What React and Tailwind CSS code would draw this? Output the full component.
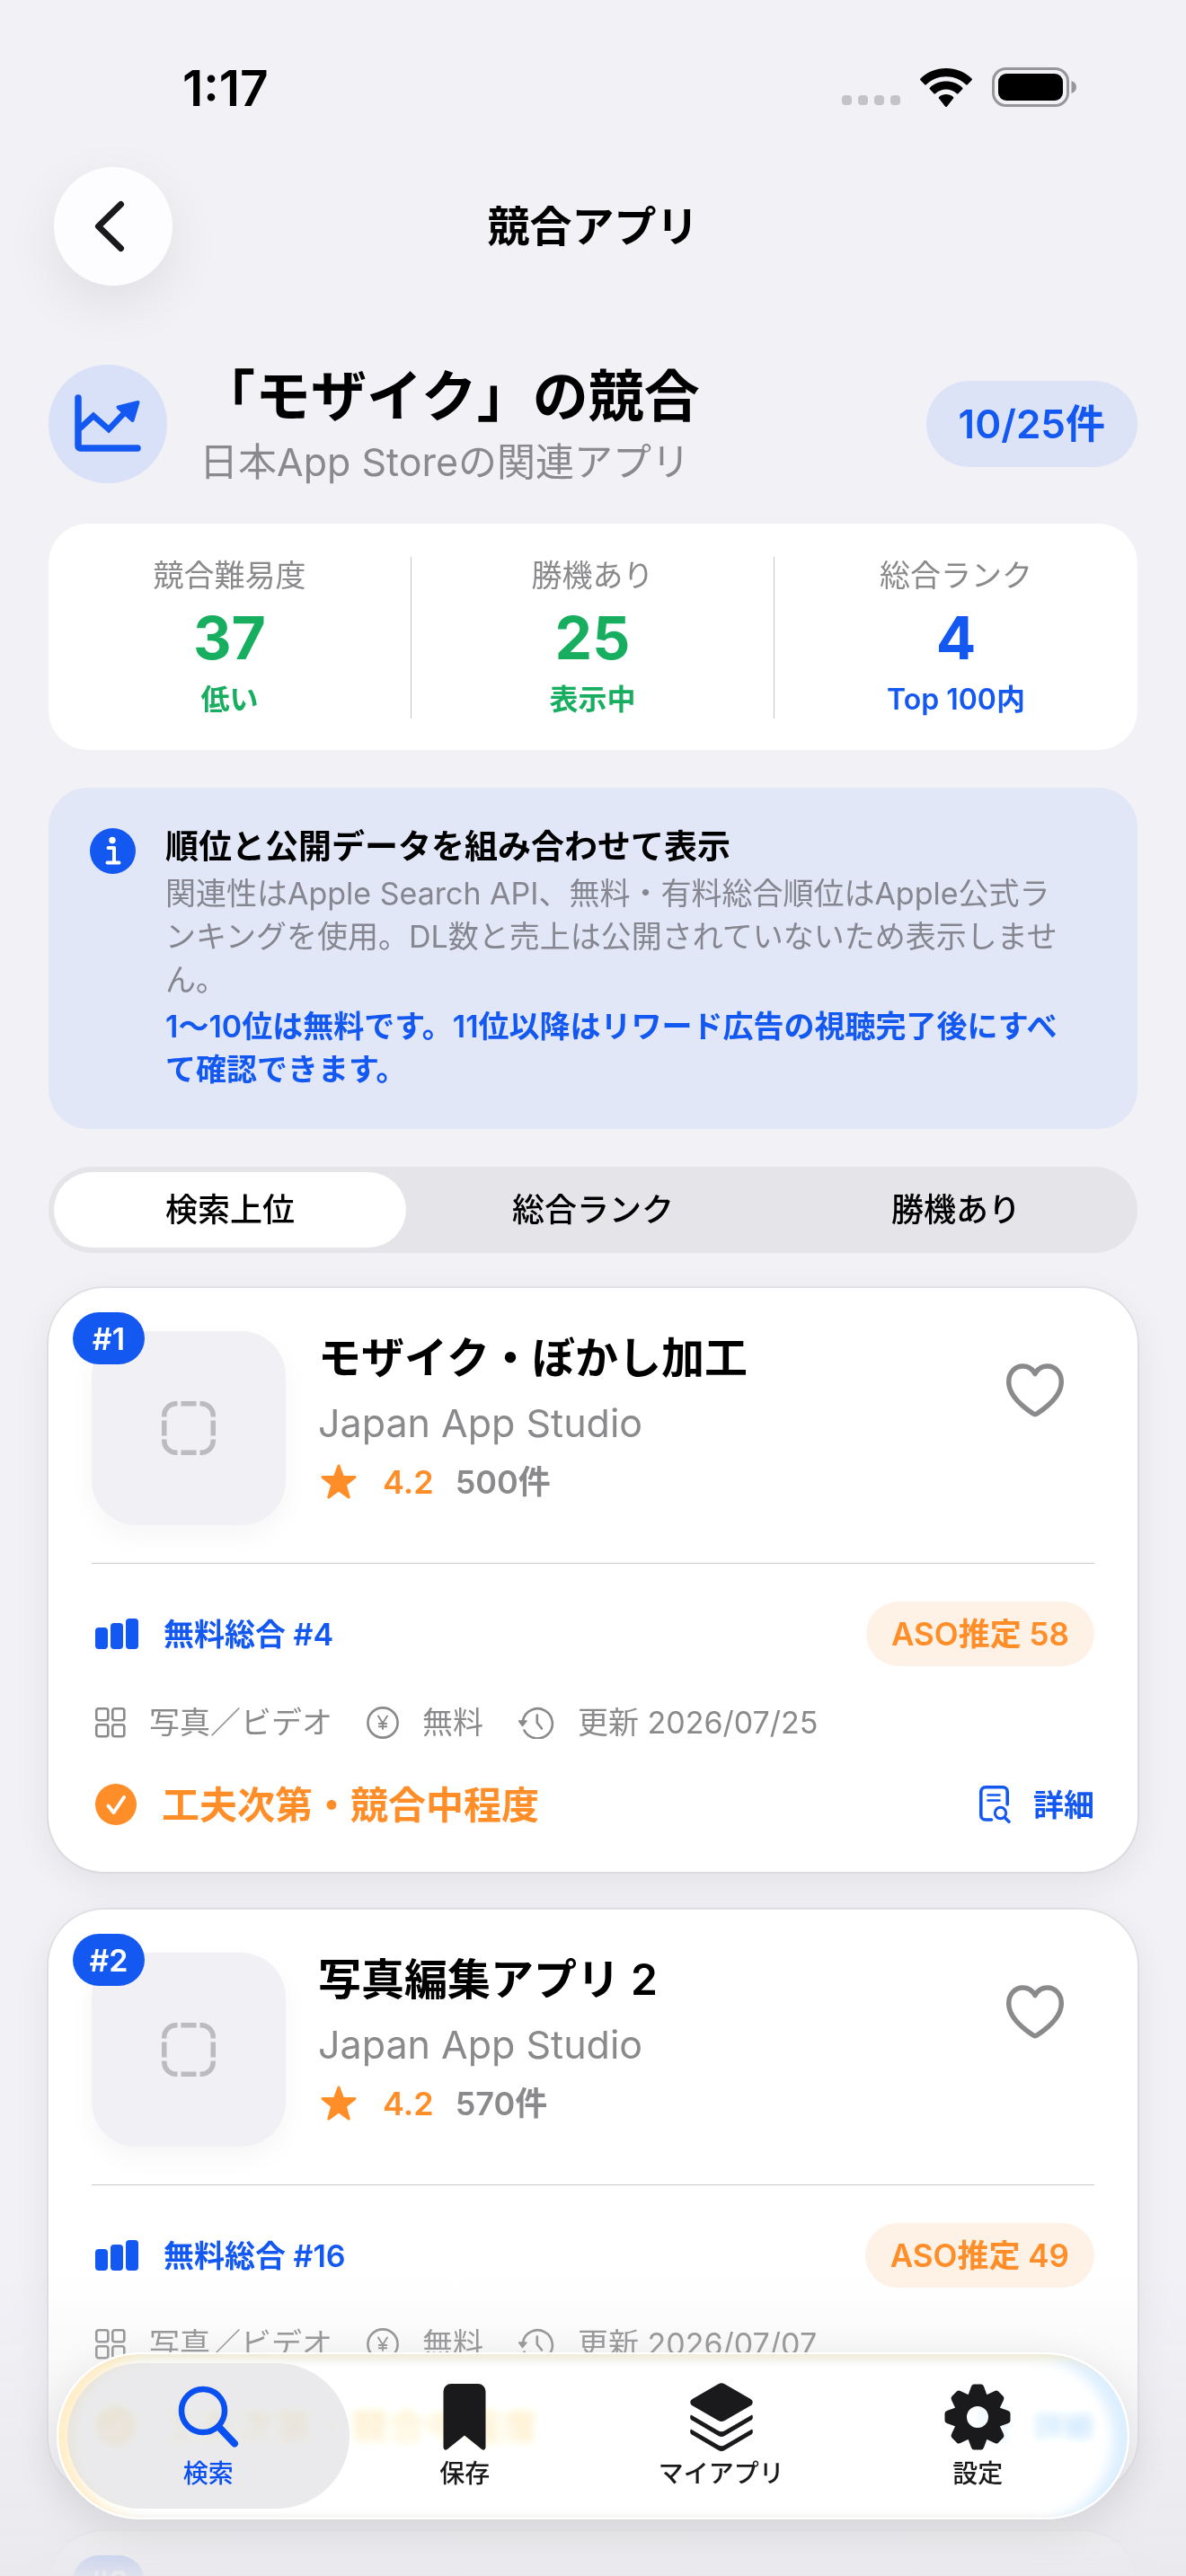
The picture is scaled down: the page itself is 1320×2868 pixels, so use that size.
import React, { useState } from 'react';

const STATS = [
    { label: '競合難易度', value: '37', note: '低い', color: 'text-[#18ae60]' },
    { label: '勝機あり', value: '25', note: '表示中', color: 'text-[#18ae60]' },
    { label: '総合ランク', value: '4', note: 'Top 100内', color: 'text-[#1458f2]' },
];

const SORTS = ['検索上位', '総合ランク', '勝機あり'];

const APPS = [
    { rank: 1, name: 'モザイク・ぼかし加工', studio: 'Japan App Studio', rating: '4.2', reviews: 500, chart: 4, aso: 58, category: '写真／ビデオ', price: '無料', updated: '2026/07/25', verdict: '工夫次第・競合中程度' },
    { rank: 2, name: '写真編集アプリ 2', studio: 'Japan App Studio', rating: '4.2', reviews: 570, chart: 16, aso: 49, category: '写真／ビデオ', price: '無料', updated: '2026/07/07', verdict: '工夫次第・競合中程度' },
    { rank: 3, name: '写真編集アプリ 3', studio: 'Japan App Studio', rating: '4.2', reviews: 640, chart: 28, aso: 47, category: '写真／ビデオ', price: '無料', updated: '2026/07/01', verdict: '工夫次第・競合中程度' },
];

/* ---------- icons ---------- */

const WifiIcon = () => (
    <svg width="58" height="43" viewBox="0 0 58 43" aria-hidden="true">
        <path d="M29 0C40 0 50 4.200 57.300 11.300a1.500 1.500 0 0 1 0 2.200L53 17.900a1.500 1.500 0 0 1-2.100 0C45 12.300 37.300 9.200 29 9.200S13 12.300 7.100 17.900a1.500 1.500 0 0 1-2.100 0L.7 13.500a1.500 1.500 0 0 1 0-2.200C8 4.200 18 0 29 0z" />
        <path d="M29 14.500c6.900 0 13.200 2.600 18 6.900a1.500 1.500 0 0 1 0 2.200l-4.300 4.300a1.500 1.500 0 0 1-2.100 0C37.400 25.200 33.400 23.600 29 23.600s-8.400 1.600-11.600 4.300a1.500 1.500 0 0 1-2.100 0L11 23.600a1.500 1.500 0 0 1 0-2.200c4.800-4.300 11.100-6.900 18-6.900z" />
        <path d="M29 29c3 0 5.600 1 7.700 2.800a1.500 1.500 0 0 1 0 2.200L30 42.400a1.400 1.400 0 0 1-2 0L21.300 34a1.500 1.500 0 0 1 0-2.200C23.400 30 26 29 29 29z" />
    </svg>
);

const BatteryIcon = () => (
    <svg width="94" height="44" viewBox="0 0 94 44" fill="none" aria-hidden="true">
        <rect x="1.500" y="1.500" width="83" height="41" rx="14" stroke="#97979b" strokeWidth="3" />
        <rect x="7" y="7" width="72" height="30" rx="9" fill="#000" />
        <path d="M88.500 15c3.500 1.200 5.500 4 5.500 7s-2 5.800-5.500 7z" fill="#97979b" />
    </svg>
);

const BackIcon = () => (
    <svg width="34" height="58" viewBox="0 0 34 58" fill="none" stroke="#1a1a1c" strokeWidth="7" strokeLinecap="round" strokeLinejoin="round" aria-hidden="true">
        <path d="M29.500 4.500 4.500 29l25 24.500" />
    </svg>
);

const TrendIcon = () => (
    <svg width="74" height="66" viewBox="0 0 74 66" fill="none" stroke="#1458f2" strokeLinecap="round" strokeLinejoin="round" aria-hidden="true">
        <path d="M4 4v53.500a2.500 2.500 0 0 0 2.500 2.500H70" strokeWidth="7.500" />
        <path d="M7 37 21 24l17 15 20-21" strokeWidth="6.500" strokeLinejoin="miter" />
        <path d="M70.500 9 48.500 14.500 64.500 29z" fill="#1458f2" strokeWidth="4" />
    </svg>
);

const InfoIcon = () => (
    <svg width="51" height="51" viewBox="0 0 51 51" className="mt-[3px] shrink-0" aria-hidden="true">
        <circle cx="25.500" cy="25.500" r="25.500" fill="#1458f2" />
        <circle cx="25" cy="13.500" r="3.700" fill="#fff" />
        <path d="M20.500 22H27v16M19.500 38.500h13" fill="none" stroke="#fff" strokeWidth="4" strokeLinecap="round" strokeLinejoin="round" />
    </svg>
);

const PlaceholderIcon = () => (
    <svg width="60" height="60" viewBox="0 0 60 60" fill="none" stroke="#bcbcc0" strokeWidth="5.500" aria-hidden="true">
        <path d="M2.750 17.500V16A13.250 13.250 0 0 1 16 2.750h1.500M42.500 2.750H44A13.250 13.250 0 0 1 57.250 16v1.500M57.250 42.500V44A13.250 13.250 0 0 1 44 57.250h-1.500M17.500 57.250H16A13.250 13.250 0 0 1 2.750 44v-1.500" />
        <path d="M21.500 2.750h17M21.500 57.250h17M2.750 21.500v17M57.250 21.500v17" />
    </svg>
);

const StarIcon = () => (
    <svg width="44" height="40" viewBox="-1 0 44 40" fill="#ff8d28" stroke="#ff8d28" strokeWidth="3" strokeLinejoin="round" aria-hidden="true">
        <path d="M22 2l4.600 12.500h13.400L29.200 23 33.200 37 22 28.800 10.800 37l4-14L4 14.500h13.400z" />
    </svg>
);

const HeartIcon = () => (
    <svg width="66" height="60" viewBox="0 0 66 60" fill="none" stroke="#8a8a8c" strokeWidth="5.500" strokeLinecap="round" strokeLinejoin="round" aria-hidden="true">
        <path d="M33 11.500C30 6 25.500 3 19.500 3 10.300 3 3.700 10.500 3.700 20.500c0 12.500 9.800 24 27.300 35.500q2 1.300 4 0c17.500-11.500 27.300-23 27.300-35.500C62.300 10.500 55.700 3 46.500 3 40.500 3 36 6 33 11.500z" />
    </svg>
);

const BarsIcon = () => (
    <svg width="48" height="34" viewBox="0 0 48 34" fill="#1458f2" aria-hidden="true">
        <rect x="0" y="10" width="14" height="24" rx="4" />
        <rect x="17" y="5" width="14" height="29" rx="4" />
        <rect x="34" y="0" width="14" height="34" rx="4" />
    </svg>
);

const GridIcon = () => (
    <svg width="34" height="34" viewBox="0 0 34 34" fill="none" stroke="#8a8a8c" strokeWidth="2.600" aria-hidden="true">
        <rect x="1.300" y="1.300" width="13" height="13" rx="2.500" />
        <rect x="19.300" y="1.300" width="13" height="13" rx="2.500" />
        <rect x="1.300" y="19.300" width="13" height="13" rx="2.500" />
        <rect x="19.300" y="19.300" width="13" height="13" rx="2.500" />
    </svg>
);

const YenIcon = () => (
    <svg width="36" height="36" viewBox="0 0 36 36" fill="none" stroke="#8a8a8c" strokeLinecap="round" aria-hidden="true">
        <circle cx="18" cy="18" r="16.600" strokeWidth="2.600" />
        <path d="M13 10.500l5 8 5-8M18 18.500V25M13.800 19h8.400M13.800 22.300h8.400" strokeWidth="1.900" />
    </svg>
);

const HistoryIcon = () => (
    <svg width="41" height="36" viewBox="0 0 41 36" fill="none" stroke="#8a8a8c" strokeWidth="2.600" strokeLinecap="round" strokeLinejoin="round" aria-hidden="true">
        <path d="M6 15.500A16.600 16.600 0 1 1 7.500 26.500" />
        <path d="M21.800 9.500V18l5.200 6.500" />
        <path d="M1.500 16h8.500L5.500 21.500z" fill="#8a8a8c" strokeWidth="1.500" />
    </svg>
);

const CheckIcon = () => (
    <svg width="46" height="46" viewBox="0 0 46 46" fill="none" aria-hidden="true">
        <circle cx="23" cy="23" r="23" fill="#ff8d28" />
        <path d="M14.500 24.500l6 7.500L32 15" stroke="#fff" strokeWidth="4" strokeLinecap="round" strokeLinejoin="round" />
    </svg>
);

const DetailIcon = () => (
    <svg width="36" height="42" viewBox="0 0 36 42" fill="none" stroke="#1458f2" strokeWidth="3.600" strokeLinecap="round" aria-hidden="true">
        <path d="M13.500 38H6.800a5 5 0 0 1-5-5V6.800a5 5 0 0 1 5-5h19.400a5 5 0 0 1 5 5V21" />
        <path d="M9.500 10.500h13M9.500 16.500h13" strokeWidth="2.600" />
        <circle cx="23.500" cy="30.500" r="6.200" strokeWidth="3" />
        <path d="M28.200 35.500l4.800 4.800" strokeWidth="3.400" />
    </svg>
);

const SearchIcon = () => (
    <svg width="68" height="70" viewBox="0 0 68 70" fill="none" stroke="currentColor" strokeLinecap="round" aria-hidden="true">
        <circle cx="28" cy="28" r="24" strokeWidth="6.500" />
        <path d="M45.500 46 63 64.500" strokeWidth="8" />
    </svg>
);

const BookmarkIcon = () => (
    <svg width="48" height="74" viewBox="0 0 48 74" fill="currentColor" aria-hidden="true">
        <path d="M9 0h30a8.500 8.500 0 0 1 8.500 8.500v62c0 3-2.800 4.200-4.900 2L24 57.500 5.400 72.500c-2.100 2.200-4.900 1-4.900-2v-62A8.500 8.500 0 0 1 9 0z" />
    </svg>
);

const LayersIcon = () => (
    <svg width="70" height="76" viewBox="0 0 70 76" fill="currentColor" aria-hidden="true">
        <path d="M31.500 1.300a7 7 0 0 1 7 0L67.500 18a4 4 0 0 1 0 7.200L38.500 42a7 7 0 0 1-7 0l-29-16.800a4 4 0 0 1 0-7.200z" />
        <path d="M1 35.500l30.500 17.700a7 7 0 0 0 7 0L69 35.500c1.700 2.600.8 5.100-1.800 6.600L38.500 59a7 7 0 0 1-7 0L2.800 42.100C.2 40.600-.7 38.100 1 35.500z" />
        <path d="M1 51.500l30.500 17.700a7 7 0 0 0 7 0L69 51.500c1.700 2.600.8 5.100-1.800 6.600L38.500 75a7 7 0 0 1-7 0L2.800 58.100C.2 56.600-.7 54.100 1 51.500z" />
    </svg>
);

const GearIcon = () => (
    <svg width="74" height="74" viewBox="-37 -37 74 74" fill="currentColor" aria-hidden="true">
        <circle r="19.500" fill="none" stroke="currentColor" strokeWidth="15" />
        {[0, 45, 90, 135, 180, 225, 270, 315].map((deg) => (
            <path key={deg} transform={`rotate(${deg})`} d="M-11-23l3.800-10.500Q-6.300-36.500-4-36.500H4q2.300 0 3.200 3L11-23z" />
        ))}
    </svg>
);

/* ---------- sections ---------- */

const StatusBar = () => (
    <div className="flex h-[186px] items-start justify-between pt-[66px] pr-[122px] pl-[203px]">
        <span className="text-[55px] leading-[64px] font-semibold">1:17</span>
        <div className="flex h-[62px] items-center">
            <div className="mr-[22px] flex gap-[7px] self-end pb-[11px]">
                {[0, 1, 2, 3].map((i) => (
                    <span key={i} className="size-[11px] rounded-[4px] bg-[#c4c4c8]" />
                ))}
            </div>
            <WifiIcon />
            <span className="ml-[22px]"><BatteryIcon /></span>
        </div>
    </div>
);

const StatsCard = () => (
    <section className="mt-[39px] grid grid-cols-3 divide-x divide-[#c6c6c8] rounded-[44px] bg-white pt-[37px] pb-[35px]">
        {STATS.map((s) => (
            <div key={s.label} className="flex flex-col items-center gap-2">
                <span className="text-[34px] leading-[42px] text-[#8a8a8c]">{s.label}</span>
                <strong className={`text-[66px] leading-[80px] font-bold ${s.color}`}>{s.value}</strong>
                <span className={`text-[32px] leading-[42px] font-semibold ${s.color}`}>{s.note}</span>
            </div>
        ))}
    </section>
);

const InfoBox = () => (
    <section className="mt-[42px] flex gap-[33px] rounded-[44px] bg-[#e2e7f7] py-[42px] pr-[72px] pl-[46px]">
        <InfoIcon />
        <div className="flex flex-col gap-1 text-[34px] leading-[48px]">
            <h3 className="text-[37px] font-semibold">順位と公開データを組み合わせて表示</h3>
            <p className="text-[#85868f]">関連性はApple Search API、無料・有料総合順位はApple公式ランキングを使用。DL数と売上は公開されていないため表示しません。</p>
            <p className="font-semibold text-[#1458f2]">1〜10位は無料です。11位以降はリワード広告の視聴完了後にすべて確認できます。</p>
        </div>
    </section>
);

const SortTabs = () => {
    const [active, setActive] = useState(0);

    return (
        <div role="tablist" className="mt-[42px] flex rounded-full bg-[#e4e4e9] py-[6px]">
            {SORTS.map((label, i) => (
                <button
                    key={label}
                    role="tab"
                    aria-selected={i === active}
                    onClick={() => setActive(i)}
                    className={`mx-[6px] h-[84px] flex-1 rounded-full text-[36px] font-medium ${i === active ? 'bg-white' : ''}`}
                >
                    {label}
                </button>
            ))}
        </div>
    );
};

const AppCard = ({ app }) => (
    <article className="rounded-[62px] bg-white px-[48px] pt-[48px] pb-[45px] shadow-[0_0_0_2px_rgba(0,0,0,0.05),0_12px_42px_rgba(0,0,0,0.07)]">
        <div className="flex">
            <div className="relative flex size-[216px] shrink-0 items-center justify-center rounded-[50px] bg-[#f1f1f5] shadow-[0_12px_30px_rgba(0,0,0,0.04)]">
                <PlaceholderIcon />
                <span className="absolute -top-[21px] -left-[21px] flex h-[58px] min-w-[80px] items-center justify-center rounded-full bg-[#1458f2] px-[18px] text-[34px] font-semibold text-white">#{app.rank}</span>
            </div>
            <div className="ml-[36px] flex flex-1 flex-col gap-3">
                <h3 className="text-[48px] leading-[60px] font-semibold">{app.name}</h3>
                <p className="text-[43px] leading-[60px] text-[#8a8a8c]">{app.studio}</p>
                <p className="flex items-center gap-[24px] text-[36px] leading-[48px] font-semibold text-[#8a8a8c]">
                    <span className="flex items-center gap-[28px] text-[#ff8d28]"><StarIcon />{app.rating}</span>
                    <span>{app.reviews}件</span>
                </p>
            </div>
            <button aria-label="お気に入り" className="flex size-[132px] items-center justify-center"><HeartIcon /></button>
        </div>

        <hr className="mt-[42px] mb-[42px] border-t border-[#c9c9cc]" />

        <div className="flex items-center justify-between text-[34px] font-semibold">
            <span className="flex items-center gap-[28px] pl-1 text-[#1458f2]"><BarsIcon />無料総合 #{app.chart}</span>
            <span className="flex h-[72px] items-center rounded-full bg-[#fef1e6] px-[28px] text-[35px] text-[#ff8d28]">ASO推定 {app.aso}</span>
        </div>

        <div className="mt-[39px] flex items-center gap-[38px] pl-1 text-[34px] leading-[48px] text-[#8a8a8c]">
            <span className="flex items-center gap-[26px]"><GridIcon />{app.category}</span>
            <span className="flex items-center gap-[26px]"><YenIcon />{app.price}</span>
            <span className="flex items-center gap-[26px]"><HistoryIcon />更新 {app.updated}</span>
        </div>

        <div className="mt-[37px] flex h-[60px] items-center justify-between pl-1">
            <span className="flex items-center gap-[28px] text-[42px] font-semibold text-[#ff8d28]"><CheckIcon />{app.verdict}</span>
            <button className="flex items-center gap-[24px] text-[34px] font-semibold text-[#1458f2]"><DetailIcon />詳細</button>
        </div>
    </article>
);

const TABS = [
    { label: '検索', icon: <SearchIcon /> },
    { label: '保存', icon: <BookmarkIcon /> },
    { label: 'マイアプリ', icon: <LayersIcon /> },
    { label: '設定', icon: <GearIcon /> },
];

const TabBar = () => {
    const [current, setCurrent] = useState(0);

    return (
        <div className="pointer-events-none fixed inset-x-0 bottom-0 bg-linear-to-b from-transparent via-[#e9e9ed]/50 via-60% to-[#e9e9ed]/95 px-[63px] pt-[90px] pb-[63px]">
            <nav className="pointer-events-auto flex rounded-full border-2 border-white bg-white/70 px-[24px] py-[10px] shadow-[inset_14px_4px_12px_rgba(255,226,165,0.6),inset_-16px_4px_14px_rgba(205,232,255,0.7),0_12px_50px_rgba(0,0,0,0.10)] backdrop-blur-[6px] backdrop-brightness-110 backdrop-saturate-200">
                {TABS.map((tab, i) => (
                    <button
                        key={tab.label}
                        onClick={() => setCurrent(i)}
                        className={`-mx-[14px] flex h-[162px] flex-1 flex-col items-center rounded-full pt-[21px] text-[28px] leading-[48px] font-medium ${i === current ? 'bg-[#dcdce0]/60 text-[#0a4ff0]' : 'text-[#1a1a1c]'}`}
                    >
                        <span className="flex h-[78px] items-center">{tab.icon}</span>
                        {tab.label}
                    </button>
                ))}
            </nav>
        </div>
    );
};

export default function App() {
    return (
        <div className="h-screen overflow-y-auto bg-[#f1f1f6] font-['Inter','Noto_Sans_CJK_JP',sans-serif] text-black [scrollbar-width:none]" lang="ja">
            <StatusBar />
            <header className="grid grid-cols-[1fr_auto_1fr] items-center px-[60px]">
                <button aria-label="戻る" className="flex size-[132px] items-center justify-center rounded-full bg-[#fdfdff] pr-[8px] shadow-[0_20px_60px_rgba(0,0,0,0.08)]">
                    <BackIcon />
                </button>
                <h1 className="text-[47px] font-semibold">競合アプリ</h1>
            </header>

            <main className="px-[54px] pt-[82px] pb-[300px]">
                <div className="flex items-center">
                    <span className="flex size-[132px] items-center justify-center rounded-full bg-[#d8e1f7]">
                        <TrendIcon />
                    </span>
                    <div className="ml-[36px] flex-1">
                        <h2 className="text-[62px] leading-[84px] font-semibold">「モザイク」の競合</h2>
                        <p className="text-[43px] leading-[60px] text-[#8a8a8c]">日本App Storeの関連アプリ</p>
                    </div>
                    <span className="flex h-[96px] items-center rounded-full bg-[#dce3f7] px-[36px] text-[44px] font-semibold text-[#1458f2]">10/25件</span>
                </div>

                <StatsCard />
                <InfoBox />
                <SortTabs />

                <div className="mt-[39px] flex flex-col gap-[42px]">
                    {APPS.map((app) => (
                        <AppCard key={app.rank} app={app} />
                    ))}
                </div>
            </main>

            <TabBar />
        </div>
    );
}
